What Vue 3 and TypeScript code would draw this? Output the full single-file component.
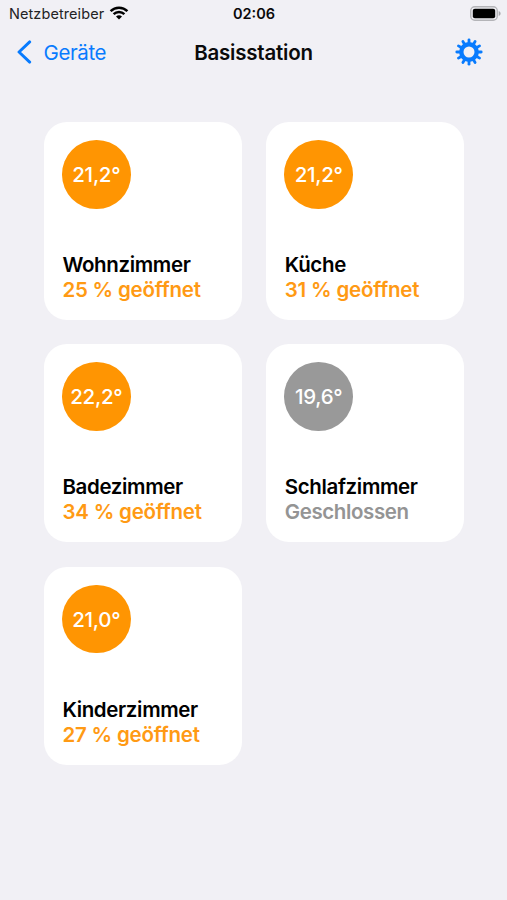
<script setup lang="ts">
interface Room {
  name: string
  temperature: string
  status: string
  open: boolean
}

const rooms: Room[] = [
  { name: 'Wohnzimmer', temperature: '21,2°', status: '25 % geöffnet', open: true },
  { name: 'Küche', temperature: '21,2°', status: '31 % geöffnet', open: true },
  { name: 'Badezimmer', temperature: '22,2°', status: '34 % geöffnet', open: true },
  { name: 'Schlafzimmer', temperature: '19,6°', status: 'Geschlossen', open: false },
  { name: 'Kinderzimmer', temperature: '21,0°', status: '27 % geöffnet', open: true },
]

const gearTeeth: number[] = Array.from({ length: 12 }, (_, i) => i * 30)
</script>

<template>
  <div class="screen">
    <div class="status-bar">
      <div class="carrier">
        <span class="carrier-name">Netzbetreiber</span>
        <svg class="wifi" width="20" height="14" viewBox="0 0 20 14" fill="none" stroke="#000">
          <path d="M1.6 5.1a12 12 0 0 1 16.8 0" stroke-width="2.5" />
          <path d="M4.6 8.2a7.700 7.700 0 0 1 10.800 0" stroke-width="2.4" />
          <path d="M10 13.600 7 10.600a4.300 4.300 0 0 1 6 0z" fill="#000" stroke="none" />
        </svg>
      </div>
      <span class="clock">02:06</span>
      <svg class="battery" width="31" height="15" viewBox="0 0 31 15">
        <rect x="0.75" y="0.75" width="26.5" height="13.5" rx="4" fill="none" stroke="#b4b4b8" stroke-width="1.4" />
        <rect x="2.8" y="2.8" width="22.4" height="9.4" rx="2" fill="#000" />
        <path d="M28.7 5c1.2.4 1.900 1.400 1.900 2.500s-.7 2.100-1.900 2.500z" fill="#a9a9ad" />
      </svg>
    </div>

    <header class="nav">
      <button class="back" type="button">
        <svg width="16" height="24" viewBox="0 0 16 24" fill="none" stroke="currentColor" stroke-width="2.9" stroke-linecap="round" stroke-linejoin="round">
          <path d="M13.700 1.900 3 12l10.700 10.100" />
        </svg>
        <span class="back-label">Geräte</span>
      </button>
      <h1 class="title">Basisstation</h1>
      <button class="settings" type="button" aria-label="Einstellungen">
        <svg width="28" height="28" viewBox="-14 -14 28 28" stroke="currentColor" fill="none">
          <circle r="7.700" stroke-width="4.400" />
          <path
            v-for="angle in gearTeeth"
            :key="angle"
            d="M0-8.500V-12.200"
            stroke-width="2.800"
            stroke-linecap="round"
            :transform="`rotate(${angle})`"
          />
        </svg>
      </button>
    </header>

    <main class="rooms">
      <article v-for="room in rooms" :key="room.name" class="card" :class="{ closed: !room.open }">
        <div class="badge"><span>{{ room.temperature }}</span></div>
        <div class="info">
          <h2 class="name">{{ room.name }}</h2>
          <p class="state">{{ room.status }}</p>
        </div>
      </article>
    </main>
  </div>
</template>

<style>
body {
  background: #f1f0f5;
}
</style>

<style scoped>
.screen {
  width: 507px;
  height: 900px;
  overflow: hidden;
  background: #f1f0f5;
  color: #0a0a0b;
  font-family: Inter, "Liberation Sans", sans-serif;
}

.status-bar {
  display: grid;
  grid-template-columns: 1fr auto 1fr;
  align-items: center;
  height: 26px;
  padding: 0 6px 0 9px;
}

.carrier {
  display: flex;
  align-items: center;
  gap: 5px;
}

.carrier-name {
  font-size: 14.5px;
  line-height: 20px;
  padding-top: 2px;
  letter-spacing: 0.08px;
  color: #222224;
}

.clock {
  padding-top: 2px;
  font-size: 14.5px;
  font-weight: 600;
  line-height: 20px;
  margin-left: -2px;
}

.battery {
  justify-self: end;
}

.nav {
  display: grid;
  grid-template-columns: 1fr auto 1fr;
  align-items: center;
  height: 52px;
  padding: 0 24px 0 16px;
}

button {
  margin: 0;
  padding: 0;
  border: 0;
  background: none;
  color: #087bfe;
  font: inherit;
}

.back {
  display: flex;
  align-items: center;
  gap: 11.5px;
}

.back-label {
  padding-top: 2px;
  font-size: 20.5px;
  line-height: 26px;
  letter-spacing: -0.4px;
}

.title {
  margin: 0 -8px 0 0;
  padding-top: 2px;
  font-size: 20.5px;
  font-weight: 600;
  line-height: 26px;
  letter-spacing: -0.22px;
}

.settings {
  display: flex;
  justify-self: end;
}

.rooms {
  display: grid;
  grid-template-columns: 198px 198px;
  grid-auto-rows: 198px;
  gap: 24.4px;
  padding: 44px 0 0 44px;
}

.card {
  display: flex;
  flex-direction: column;
  justify-content: space-between;
  box-sizing: border-box;
  padding: 18px;
  border-radius: 23px;
  background: #fff;
}

.badge {
  display: flex;
  align-items: center;
  justify-content: center;
  width: 68.6px;
  height: 68.6px;
  border-radius: 50%;
  background: #ff9502;
  color: #fff;
  font-size: 20.5px;
  font-weight: 550;
  letter-spacing: -0.25px;
}

.name,
.state {
  margin: 0;
  font-size: 20.5px;
  line-height: 25px;
  white-space: nowrap;
}

.name {
  padding-left: 0.4px;
  font-weight: 600;
  letter-spacing: -0.35px;
  color: #000;
}

.state {
  padding-left: 0.4px;
  font-weight: 560;
  letter-spacing: -0.2px;
  color: #ff9a14;
}

.closed .badge {
  background: #999;
}

.closed .state {
  letter-spacing: -0.4px;
  color: #949494;
}
</style>
